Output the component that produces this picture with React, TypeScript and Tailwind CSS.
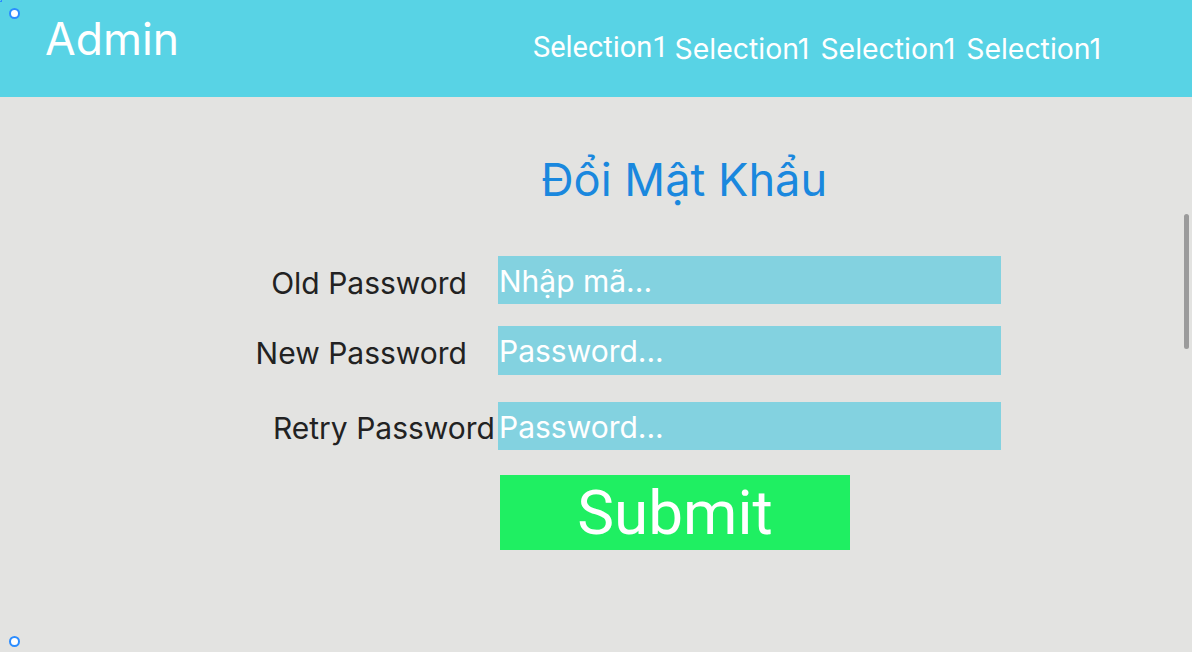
import React from "react";

export default function App() {
  return (
    <div className="relative w-[1192px] h-[652px] overflow-hidden bg-[#e3e3e1] flex flex-col" style={{ fontFamily: "Inter, 'Noto Sans', sans-serif" }}>
      <header className="h-[97px] shrink-0 bg-[#58d3e5] flex items-start text-white">
        <div className="pl-[45px] pt-[11px] text-[44.5px] leading-[57px]">Admin</div>
        <nav className="ml-auto mr-[91px] pt-[30px] flex items-start text-[28.4px] leading-[34px]">
          <span className="font-['Roboto'] text-[29px] leading-[34px]">Selection1</span>
          <span className="ml-[6px] pt-[2px]">Selection1</span>
          <span className="ml-[11px] pt-[2px]">Selection1</span>
          <span className="ml-[11px] pt-[2px]">Selection1</span>
        </nav>
      </header>
      <main className="flex-1 flex flex-col">
        <h1 className="pl-[541px] pt-[56px] text-[45.2px] leading-[54px] text-[#1a88de]">Đổi Mật Khẩu</h1>
        <div className="mt-[49px] flex flex-col text-[30px]">
          <div className="flex items-start h-[48px]">
            <div className="w-[498px] pr-[31px] pt-[3px] text-right text-[#222] leading-[48px]">Old Password</div>
            <div className="w-[503px] h-[48px] bg-[#83d2e0] text-white pl-[1px] leading-[51px]">Nhập mã...</div>
          </div>
          <div className="mt-[22px] flex items-start h-[49px]">
            <div className="w-[498px] pr-[31px] pt-[3px] text-right text-[#222] leading-[49px]">New Password</div>
            <div className="w-[503px] h-[49px] bg-[#83d2e0] text-white pl-[1px] leading-[51px]">Password...</div>
          </div>
          <div className="mt-[27px] flex items-start h-[48px]">
            <div className="w-[498px] pr-[3px] pt-[2px] text-right text-[#222] leading-[48px]">Retry Password</div>
            <div className="w-[503px] h-[48px] bg-[#83d2e0] text-white pl-[1px] leading-[51px]">Password...</div>
          </div>
          <div className="mt-[25px] ml-[500px] w-[350px] h-[75px] bg-[#1fef62] text-white flex items-center justify-center font-['Roboto'] text-[62px] leading-[75px]">
            Submit
          </div>
        </div>
      </main>
      <div className="absolute left-[1184px] top-[214px] w-[5px] h-[135px] rounded-full bg-[#9b9b9b]" />
      <div className="absolute left-[9px] top-[8px] w-[11px] h-[11px] rounded-full border-[2px] border-[#2b8cff] bg-white" />
      <div className="absolute left-[9px] top-[636px] w-[11px] h-[11px] rounded-full border-[2px] border-[#2b8cff] bg-white" />
      <div className="absolute left-[-2px] top-[-2px] w-[4px] h-[4px] border border-[#2b8cff]" />
    </div>
  );
}
